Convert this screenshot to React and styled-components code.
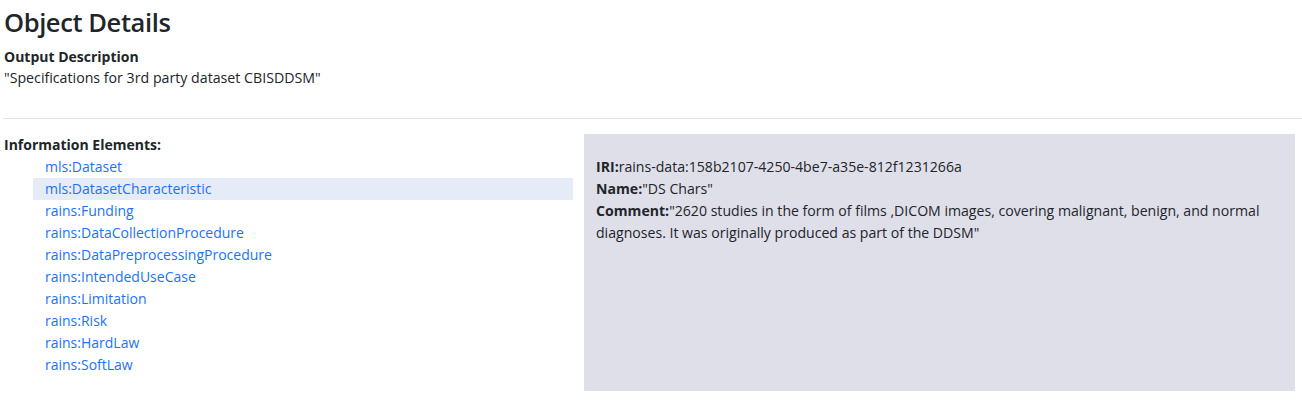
import styled, { createGlobalStyle } from 'styled-components'

const Global = createGlobalStyle`
    body {
        margin: 0;
        background: #fff;
        font-family: "Open Sans", "Noto Sans", sans-serif;
        color: #212529;
    }
`

const Page = styled.div`
    padding: 0 0 0 4px;
`

const Title = styled.h3`
    margin: 0 0 8px;
    padding-top: 6px;
    font-size: 25.5px;
    font-weight: 600;
    line-height: 32px;
    letter-spacing: -0.4px;
`

const Label = styled.div`
    font-weight: 700;
    font-size: 14px;
    line-height: ${p => p.$lh || '21px'};
    margin-top: ${p => p.$mt || '4px'};
`

const Text = styled.div`
    font-size: 14.2px;
    line-height: 21px;
`

const Rule = styled.hr`
    margin: 30px 0 0 -1px;
    border: none;
    border-top: 1px solid #e3e3e3;
`

const Row = styled.div`
    display: grid;
    grid-template-columns: 580px 711px;
    margin-top: 15px;
`

const Elements = styled.div`
    padding-top: 0;
`

const List = styled.ul`
    list-style: none;
    margin: 0;
    padding: 0 0 0 29px;
`

const Item = styled.li`
    box-sizing: border-box;
    font-size: 14px;
    line-height: 22px;
    padding-left: 12px;
    width: 540px;
    background: ${p => (p.$active ? '#e6ecf7' : 'transparent')};
    color: #1a73f5;
    cursor: pointer;
`

const Panel = styled.div`
    background: #dfdfea;
    height: 257px;
    padding: 22px 12px 0;
    box-sizing: border-box;
`

const Line = styled.div`
    font-size: 14.1px;
    line-height: 22px;
    b {
        font-weight: 700;
    }
`

const elements = [
    'mls:Dataset',
    'mls:DatasetCharacteristic',
    'rains:Funding',
    'rains:DataCollectionProcedure',
    'rains:DataPreprocessingProcedure',
    'rains:IntendedUseCase',
    'rains:Limitation',
    'rains:Risk',
    'rains:HardLaw',
    'rains:SoftLaw',
]

export default function App() {
    return (
        <Page>
            <Global />
            <Title>Object Details</Title>
            <Label $mt="0">Output Description</Label>
            <Text>"Specifications for 3rd party dataset CBISDDSM"</Text>
            <Rule />
            <Row>
                <Elements>
                    <Label $mt="0" $lh="22px">Information Elements:</Label>
                    <List>
                        {elements.map((e, i) => (
                            <Item key={e} $active={i === 1}>{e}</Item>
                        ))}
                    </List>
                </Elements>
                <Panel>
                    <Line><b>IRI:</b>rains-data:158b2107-4250-4be7-a35e-812f1231266a</Line>
                    <Line><b>Name:</b>"DS Chars"</Line>
                    <Line>
                        <b>Comment:</b>"2620 studies in the form of films ,DICOM images, covering malignant, benign, and normal
                        diagnoses. It was originally produced as part of the DDSM"
                    </Line>
                </Panel>
            </Row>
        </Page>
    )
}
